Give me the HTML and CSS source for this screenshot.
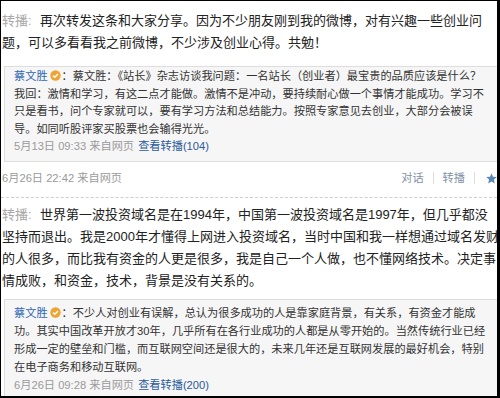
FILE: index.html
```html
<!DOCTYPE html>
<html lang="zh-CN">
<head>
  <meta charset="UTF-8">
  <meta name="viewport" content="width=device-width, initial-scale=1.0">
  <title>转播</title>
  <link rel="stylesheet" href="styles.css">
</head>
<body>
  <div class="frame">
    <div class="feed">
      <div class="item first">
        <p class="text"><span class="tag">转播:</span>再次转发这条和大家分享。因为不少朋友刚到我的微博，对有兴趣一些创业问<br>题，可以多看看我之前微博，不少涉及创业心得。共勉！</p>
        <div class="quote">
          <p><a class="name">蔡文胜</a><i class="vip"><svg width="11" height="11" viewBox="0 0 11 11"><circle cx="5.5" cy="5.5" r="5.2" fill="#f0a330"/><path d="M3 5.6 L4.8 7.3 L8 3.9" fill="none" stroke="#fff" stroke-width="1.5"/></svg></i>：蔡文胜：《站长》杂志访谈我问题：一名站长（创业者）最宝贵的品质应该是什么？<br>我回：激情和学习，有这二点才能做。激情不是冲动，要持续耐心做一个事情才能成功。学习不<br>只是看书，问个专家就可以，要有学习方法和总结能力。按照专家意见去创业，大部分会被误<br>导。如同听股评家买股票也会输得光光。</p>
          <p class="meta">5月13日 09:33 来自网页 <a class="link">查看转播(104)</a></p>
        </div>
        <div class="foot">
          <span class="time">6月26日 22:42 来自网页</span>
          <span class="acts">
            <a>对话</a><i class="sep"></i><a>转播</a><i class="sep"></i>
            <svg class="star" width="11" height="11" viewBox="0 0 11 11"><path d="M5.5 0.3 L7 3.8 L10.8 4.1 L7.9 6.6 L8.8 10.4 L5.5 8.4 L2.2 10.4 L3.1 6.6 L0.2 4.1 L4 3.8 Z" fill="#5a86b8"/></svg>
          </span>
        </div>
      </div>
      <div class="item second">
        <p class="text"><span class="tag">转播:</span>世界第一波投资域名是在1994年，中国第一波投资域名是1997年，但几乎都没<br>坚持而退出。我是2000年才懂得上网进入投资域名，当时中国和我一样想通过域名发财<br>的人很多，而比我有资金的人更是很多，我是自己一个人做，也不懂网络技术。决定事<br>情成败，和资金，技术，背景是没有关系的。</p>
        <div class="quote">
          <p><a class="name">蔡文胜</a><i class="vip"><svg width="11" height="11" viewBox="0 0 11 11"><circle cx="5.5" cy="5.5" r="5.2" fill="#f0a330"/><path d="M3 5.6 L4.8 7.3 L8 3.9" fill="none" stroke="#fff" stroke-width="1.5"/></svg></i>：不少人对创业有误解，总认为很多成功的人是靠家庭背景，有关系，有资金才能成<br>功。其实中国改革开放才30年，几乎所有在各行业成功的人都是从零开始的。当然传统行业已经<br>形成一定的壁垒和门槛，而互联网空间还是很大的，未来几年还是互联网发展的最好机会，特别<br>在电子商务和移动互联网。</p>
          <p class="meta">6月26日 09:28 来自网页 <a class="link">查看转播(200)</a></p>
        </div>
      </div>
    </div>
  </div>
</body>
</html>
```

FILE: styles.css
```css
*{
  margin: 0;
  padding: 0;
}
body{
  background: #fff;
  font-family: "Liberation Sans", "Noto Sans CJK SC", sans-serif;
}
.frame{
  width: 500px;
  height: 398px;
  box-sizing: border-box;
  border-style: solid;
  border-color: #000;
  border-width: 1px 3px 2px 1px;
  overflow: hidden;
  background: #fff;
}
.feed .item{
  padding-left: 1px;
}
.item.first{
  padding-top: 9px;
  padding-bottom: 10px;
  border-bottom: 1px dashed #cfcfcf;
}
.item.second{
  padding-top: 6px;
}
.item p.text{
  font-size: 13px;
  line-height: 22px;
  color: #222;
  white-space: nowrap;
}
.item p.text .tag{
  display: inline-block;
  width: 38px;
  color: #a8a8a8;
}
.quote{
  margin: 12px -6px 0 2px;
  padding: 1px 9px 5px;
  background: #f6f6f6;
  border: 1px solid #dedede;
  font-size: 11.2px;
  line-height: 17.5px;
  color: #333;
  white-space: nowrap;
}
.item.second .quote{
  margin-top: 7px;
  padding-top: 4px;
  line-height: 18px;
}
.quote a.name{
  color: #2f66b3;
}
.quote i.vip{
  display: inline-block;
  width: 11px;
  height: 11px;
  margin: 0 1px 0 2px;
  vertical-align: -1px;
}
.quote i.vip svg{
  display: block;
}
.quote p.meta{
  color: #9a9a9a;
}
.quote p.meta a.link{
  margin-left: 1px;
  color: #2b5a9c;
}
.foot{
  display: flex;
  justify-content: space-between;
  align-items: center;
  margin-top: 8px;
  font-size: 11.2px;
  line-height: 17.5px;
}
.foot .time{
  color: #9a9a9a;
}
.foot .acts{
  display: flex;
  align-items: center;
}
.foot .acts a{
  color: #7f92a8;
}
.foot .acts i.sep{
  display: block;
  width: 1px;
  height: 12px;
  margin: 0 9px;
  background: #dcdcdc;
}
.foot .acts .star{
  display: block;
  margin-left: 2px;
}
```
